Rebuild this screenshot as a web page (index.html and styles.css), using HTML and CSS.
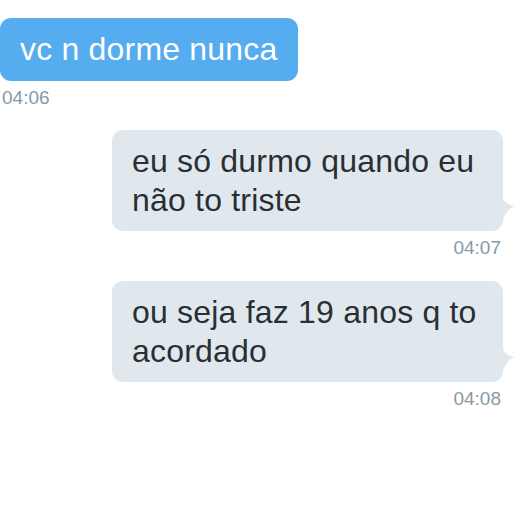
FILE: index.html
```html
<!DOCTYPE html>
<html>
<head>
<meta charset="utf-8">
<link rel="stylesheet" href="styles.css">
</head>
<body>
<div class="chat">
  <div class="msg in">
    <div class="bubble blue">vc n dorme nunca</div>
    <div class="time">04:06</div>
  </div>
  <div class="msg out">
    <div class="bubble gray">eu só durmo quando eu não to triste<svg class="tail" width="14" height="28" viewBox="0 0 14 28"><path d="M0 0 C1 6 5 10 13 11 C7 13 3 18 0 28 Z" fill="#e1e8ed"/></svg></div>
    <div class="time">04:07</div>
  </div>
  <div class="msg out">
    <div class="bubble gray">ou seja faz 19 anos q to acordado<svg class="tail" width="14" height="28" viewBox="0 0 14 28"><path d="M0 0 C1 6 5 10 13 11 C7 13 3 18 0 28 Z" fill="#e1e8ed"/></svg></div>
    <div class="time">04:08</div>
  </div>
</div>
</body>
</html>
```
FILE: styles.css
```css
html, body {
  margin: 0;
  padding: 0;
  background: #ffffff;
}
.chat {
  padding-top: 18px;
  display: flex;
  flex-direction: column;
  font-family: "Liberation Sans", Arial, sans-serif;
}
.msg {
  display: flex;
  flex-direction: column;
}
.msg.in {
  align-items: flex-start;
  margin-bottom: 22px;
}
.msg.out {
  align-items: flex-end;
  padding-right: 21px;
  margin-bottom: 23px;
}
.bubble {
  position: relative;
  font-size: 32px;
  letter-spacing: 0.2px;
  line-height: 39px;
  border-radius: 11px;
  box-sizing: border-box;
}
.blue {
  background: #55acee;
  color: #ffffff;
  padding: 12px 20px 12px 20px;
}
.gray {
  background: #e1e8ed;
  color: #292f33;
  padding: 12px 20px 11px 20px;
  max-width: 391px;
}
.tail {
  position: absolute;
  right: -13px;
  bottom: 8px;
}
.time {
  font-size: 19px;
  line-height: 20px;
  color: #8899a6;
  margin-top: 7px;
}
.msg.in .time {
  padding-left: 2px;
}
.msg.out .time {
  padding-right: 2px;
}
```
